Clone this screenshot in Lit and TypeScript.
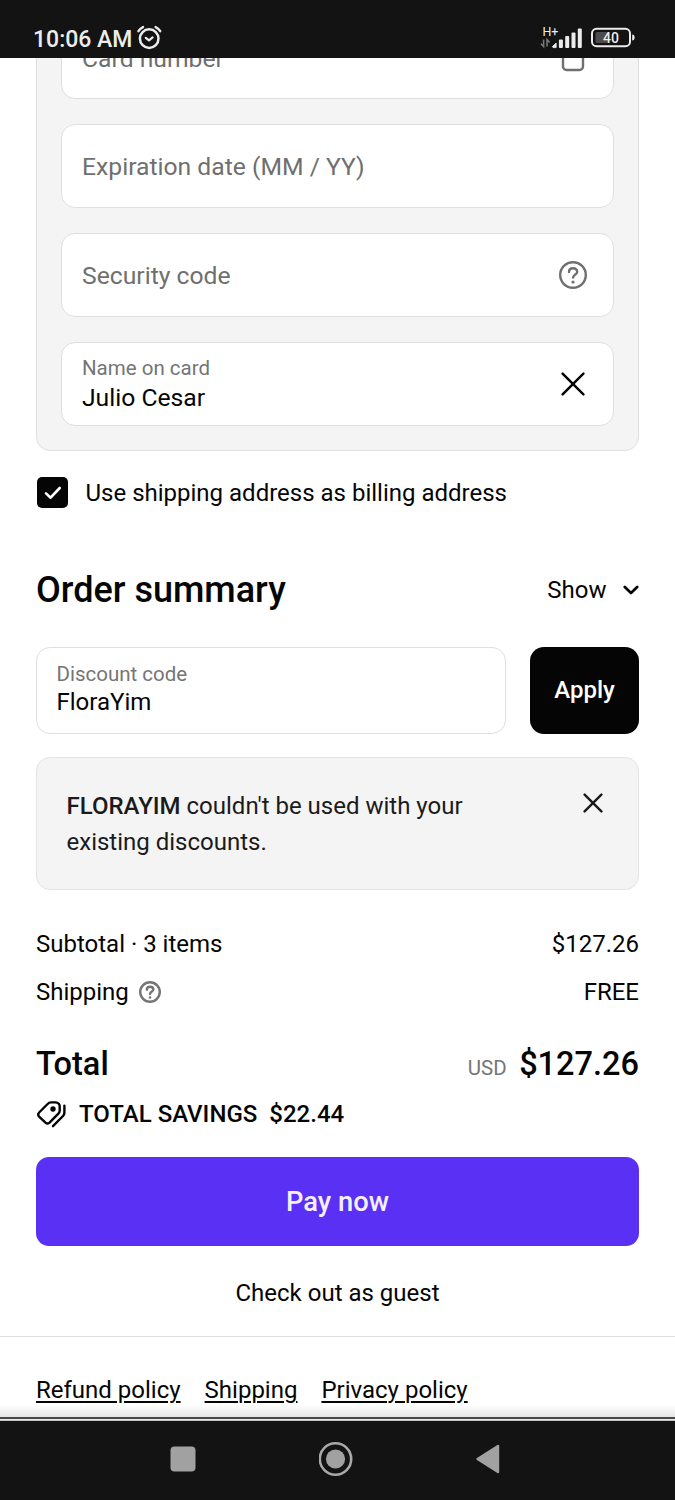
import { LitElement, html, css, svg } from "lit";
import { customElement } from "lit/decorators.js";

const closeIcon = (size: number, stroke: number) => html`
  <svg width=${size} height=${size} viewBox="0 0 ${size} ${size}" fill="none" stroke="currentColor"
    stroke-width=${stroke} stroke-linecap="round">
    <path d="M1.6 1.6 L${size - 1.6} ${size - 1.6} M${size - 1.6} 1.6 L1.6 ${size - 1.6}" />
  </svg>`;

const questionMark = svg`
  <path d="M10 11 C10 8.5 11.8 7.2 14 7.2 C16.5 7.2 18.2 8.8 18.2 10.9 C18.2 13.6 14.3 13.4 14.1 16.6" />
  <circle cx="14" cy="21" r="1.6" fill="currentColor" stroke="none" />`;

const helpIcon = (size: number, stroke: number) => html`
  <svg width=${size} height=${size} viewBox="0 0 28 28" fill="none" stroke="currentColor"
    stroke-width=${stroke} stroke-linecap="round">
    <circle cx="14" cy="14" r=${14 - stroke / 2} />
    ${questionMark}
  </svg>`;

@customElement("status-bar")
class StatusBar extends LitElement {
  static styles = css`
    :host {
      display: flex;
      flex: none;
      align-items: center;
      justify-content: space-between;
      box-sizing: border-box;
      height: 58px;
      padding: 18px 40px 0 33px;
      background: #131313;
      color: #ececec;
    }
    .clock, .signals { display: flex; align-items: center; }
    .clock { gap: 4.5px; }
    .time { font-size: 23px; font-weight: 500; line-height: 28px; padding-top: 3px; }
    .signals { gap: 9px; }
    svg { display: block; overflow: visible; }
    .net { font-size: 12.5px; }
    .level { font-size: 14px; font-weight: 500; }
  `;
  render() {
    return html`
      <div class="clock">
        <span class="time">10:06 AM</span>
        <svg width="25" height="24" viewBox="0 0 25 24" fill="none" stroke="#ececec" stroke-linecap="round">
          <circle cx="12.2" cy="12.6" r="9.3" stroke-width="2.5" />
          <path d="M8.8 11.8 L12 14.4 L15.6 11.4" stroke-width="2.2" stroke-linejoin="round" />
          <path d="M1.4 5.2 Q3 2.5 6 1.1 M23.2 5.2 Q21.6 2.5 18.6 1.1" stroke-width="2.4" />
        </svg>
      </div>
      <div class="signals">
        <svg width="42" height="24" viewBox="0 0 42 24" fill="#ececec">
          <text class="net" x="2.4" y="10">H+</text>
          <path d="M3.6 13.6 V20.5 L1 17.8 M7 20.5 V13.6 L9.6 16.4" fill="none" stroke="#777" stroke-width="1.6" />
          <path d="M12.4 20.5 L16.2 17 V21.6 H13 Z" stroke="#ececec" stroke-width="0.8" stroke-linejoin="round" />
          <rect x="18.9" y="13.5" width="4" height="8.5" rx="1" />
          <rect x="25.2" y="10" width="4" height="12" rx="1" />
          <rect x="31.5" y="6.5" width="4" height="15.5" rx="1" />
          <rect x="37.8" y="2.6" width="4" height="19.4" rx="1" />
        </svg>
        <svg width="44" height="20" viewBox="0 0 44 20">
          <rect x="1" y="0.8" width="38" height="17.4" rx="4.5" fill="none" stroke="#ececec" stroke-width="2" />
          <rect x="4.5" y="4" width="12" height="11" rx="1.5" fill="#4c4c4c" />
          <text class="level" x="20" y="15" text-anchor="middle" fill="#ececec">40</text>
          <path d="M41.2 6.6 q2.4 0 2.4 2.9 q0 2.9 -2.4 2.9 z" fill="#ececec" />
        </svg>
      </div>`;
  }
}

@customElement("nav-bar")
class NavBar extends LitElement {
  static styles = css`
    :host {
      display: flex;
      flex: none;
      justify-content: space-between;
      align-items: center;
      box-sizing: border-box;
      height: 79px;
      padding: 0 175px 3px 170px;
      background: #131313;
    }
    svg { display: block; }
  `;
  render() {
    return html`
      <svg width="26" height="26"><rect x="0.5" y="0.5" width="25" height="25" rx="4" fill="#a1a1a1" /></svg>
      <svg width="34" height="34" viewBox="0 0 34 34">
        <circle cx="16.5" cy="17" r="15.7" fill="none" stroke="#a9a9a9" stroke-width="2.6" />
        <circle cx="16.5" cy="17" r="9.6" fill="#a1a1a1" />
      </svg>
      <svg width="24" height="30" viewBox="0 0 24 30">
        <path d="M1.6 15 L22 2 V28 Z" fill="#a1a1a1" stroke="#a1a1a1" stroke-width="2.4" stroke-linejoin="round" />
      </svg>`;
  }
}

@customElement("app-root")
class AppRoot extends LitElement {
  static styles = css`
    :host {
      display: flex;
      flex-direction: column;
      height: 1500px;
      overflow: hidden;
      background: #fff;
      color: #050505;
      font-family: Roboto, "Noto Sans", sans-serif;
      font-size: 24px;
      line-height: 36px;
    }
    svg { display: block; flex: none; }
    .page { flex: none; height: 1359px; overflow: hidden; display: flex; flex-direction: column; }
    .content { padding: 0 36px; margin-top: -68px; }
    .panel, .field, .notice { box-sizing: border-box; border: 1px solid #dfdfdf; border-radius: 14px; }
    .panel {
      display: flex;
      flex-direction: column;
      gap: 25px;
      height: 461px;
      padding: 24px;
      background: #f4f4f4;
    }
    .field {
      display: flex;
      align-items: center;
      justify-content: space-between;
      height: 84px;
      padding: 2px 26px 0 20px;
      background: #fff;
      color: #6f6f6f;
    }
    .panel .field { font-size: 24.7px; }
    .panel .first { padding-top: 4px; }
    .field svg { margin-top: -2px; }
    .stack { display: flex; flex-direction: column; }
    .label { font-size: 20.5px; line-height: 26px; color: #757575; }
    .value { line-height: 34px; color: #050505; }
    .ink { color: #050505; }
    .check { display: flex; align-items: center; gap: 17.5px; margin: 24px 0 0 1px; }
    .box { width: 31px; height: 31px; margin-bottom: 1px; border-radius: 5px; background: #050505; display: grid; place-items: center; }
    .head { display: flex; align-items: center; justify-content: space-between; margin-top: 55px; height: 48px; }
    .title { font-size: 36px; font-weight: 500; margin: 0; }
    .show { display: flex; align-items: center; gap: 16px; margin: 0 0.5px 1px 0; }
    .show svg { margin-top: 1px; }
    .discount { display: flex; gap: 24px; margin-top: 33px; }
    .discount .field { flex: 1; height: 87px; padding: 0 19.5px 3px; }
    .discount .value { line-height: 30px; }
    .apply {
      box-sizing: border-box;
      width: 109px;
      height: 87px;
      padding-bottom: 2px;
      border-radius: 14px;
      background: #050505;
      color: #fff;
      font-weight: 500;
      display: grid;
      place-items: center;
    }
    .notice {
      display: flex;
      justify-content: space-between;
      align-items: flex-start;
      height: 133px;
      margin-top: 23px;
      padding: 30px 35px 0 29.5px;
      background: #f4f4f4;
      color: #1b1b1b;
      border-color: #e4e4e4;
    }
    .notice b { font-weight: 500; }
    .notice p { margin: 0; width: 420px; }
    .notice svg { margin-top: 5px; }
    .row { display: flex; justify-content: space-between; align-items: center; }
    .sub { margin-top: 36px; }
    .ship { margin-top: 12px; }
    .with-icon { display: flex; align-items: center; gap: 10px; }
    .grey { color: #757575; }
    .total { align-items: baseline; margin-top: 34px; font-size: 32.5px; line-height: 40px; font-weight: 500; }
    .amount { display: flex; align-items: baseline; gap: 12.5px; }
    .currency { font-size: 20.5px; font-weight: 400; color: #757575; }
    .savings { display: flex; align-items: center; gap: 12px; margin-top: 8px; font-weight: 500; }
    .pay {
      height: 89px;
      margin-top: 25px;
      border-radius: 13px;
      background: #5a31f4;
      color: #f4f0ff;
      font-size: 27.3px;
      font-weight: 500;
      display: grid;
      place-items: center;
    }
    .guest { margin-top: 29px; text-align: center; }
    .links {
      display: flex;
      gap: 24px;
      flex: 1;
      margin-top: 25px;
      padding: 35px 36px 0;
      border-top: 1px solid #dedede;
      background: linear-gradient(#fff 68px, #e4e4e4 81px);
    }
    .links a { color: inherit; text-decoration: underline; text-decoration-thickness: 1.7px; text-underline-offset: 3px; }
    .edge { flex: none; height: 4px; box-sizing: border-box; border-top: 2px solid #48484a; border-bottom: 1px solid #c0c0c0; background: #eee; }
  `;
  render() {
    return html`
      <status-bar></status-bar>
      <main class="page">
        <div class="content">
          <section class="panel">
            <div class="field first">
              <span>Card number</span>
              <svg width="28" height="28" viewBox="0 0 28 28" fill="none" stroke="#6f6f6f" stroke-width="2.4">
                <rect x="4" y="9" width="20" height="17" rx="3.5" />
                <path d="M8.5 9 V6.5 a5.5 5.5 0 0 1 11 0 V9" />
              </svg>
            </div>
            <div class="field"><span>Expiration date (MM / YY)</span></div>
            <div class="field"><span>Security code</span>${helpIcon(28, 2.4)}</div>
            <div class="field">
              <div class="stack"><span class="label">Name on card</span><span class="value">Julio Cesar</span></div>
              <svg class="ink" width="28" height="28" viewBox="0 0 28 28" fill="none" stroke="currentColor" stroke-width="2.5" stroke-linecap="round">
                <path d="M3.6 3.6 L24.4 24.4 M24.4 3.6 L3.6 24.4" />
              </svg>
            </div>
          </section>
          <div class="check">
            <span class="box">
              <svg width="18" height="14" viewBox="0 0 18 14" fill="none" stroke="#fff" stroke-width="2.6" stroke-linecap="round" stroke-linejoin="round">
                <path d="M2 7.4 L6.6 11.7 L15.7 2" />
              </svg>
            </span>
            <span>Use shipping address as billing address</span>
          </div>
          <div class="head">
            <h2 class="title">Order summary</h2>
            <span class="show">Show
              <svg width="16" height="10" viewBox="0 0 16 10" fill="none" stroke="currentColor" stroke-width="2.7" stroke-linecap="round" stroke-linejoin="round">
                <path d="M1.8 2 L8 8 L14.2 2" />
              </svg>
            </span>
          </div>
          <div class="discount">
            <div class="field">
              <div class="stack"><span class="label">Discount code</span><span class="value">FloraYim</span></div>
            </div>
            <div class="apply">Apply</div>
          </div>
          <div class="notice">
            <p><b>FLORAYIM</b> couldn't be used with your existing discounts.</p>
            ${closeIcon(20, 2.4)}
          </div>
          <div class="row sub"><span>Subtotal · 3 items</span><span>$127.26</span></div>
          <div class="row ship">
            <span class="with-icon">Shipping <span class="grey">${helpIcon(22, 3.1)}</span></span>
            <span>FREE</span>
          </div>
          <div class="row total">
            <span>Total</span>
            <span class="amount"><span class="currency">USD</span>$127.26</span>
          </div>
          <div class="savings">
            <svg width="31" height="28" viewBox="0 0 31 28" fill="none" stroke="currentColor" stroke-width="2.4" stroke-linecap="round" stroke-linejoin="round">
              <path d="M11.6 4 Q13.1 2.4 15 2.4 L19.5 2.4 Q23.5 2.6 23.7 6.4 L23.7 10.6 Q23.7 12.4 22.4 13.7 L13.5 22.6 Q11.5 24.3 9.5 22.6 L3.1 16.6 Q1.3 14.6 3.1 12.5 Z" />
              <circle cx="17" cy="9" r="2.7" fill="currentColor" stroke="none" />
              <path d="M28.4 5.6 V12.4 Q28.4 14.6 27 16 L17 26.2" />
            </svg>
            <span>TOTAL SAVINGS</span><span>$22.44</span>
          </div>
          <div class="pay">Pay now</div>
          <div class="guest">Check out as guest</div>
        </div>
        <footer class="links"><a>Refund policy</a><a>Shipping</a><a>Privacy policy</a></footer>
      </main>
      <div class="edge"></div>
      <nav-bar></nav-bar>`;
  }
}
